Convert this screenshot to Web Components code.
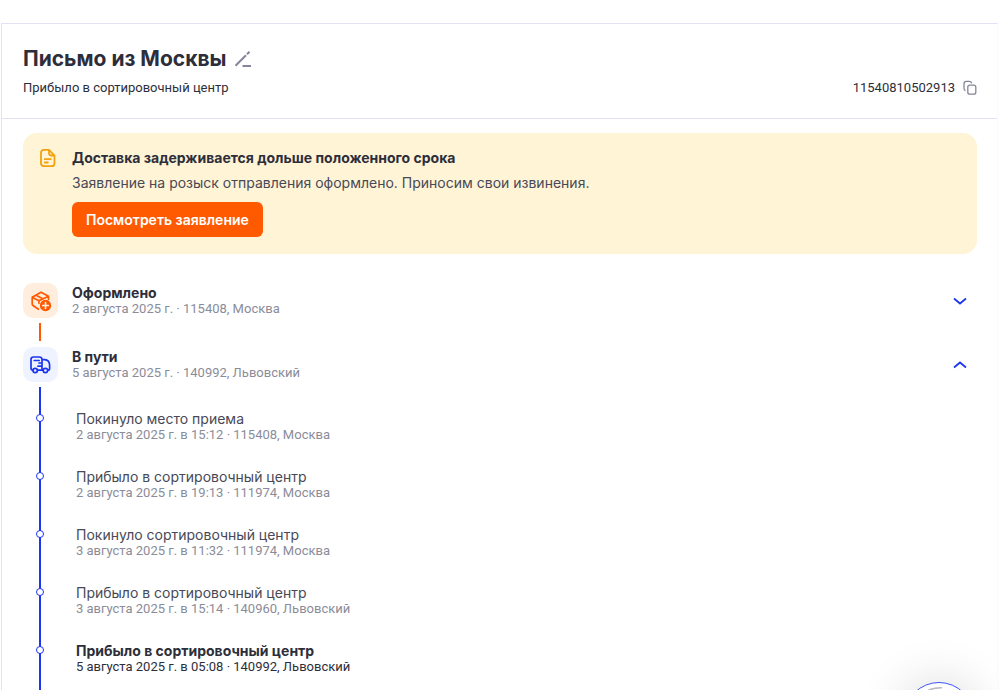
<!DOCTYPE html>
<html lang="ru">
<head>
<meta charset="utf-8">
<meta name="viewport" content="width=device-width, initial-scale=1">
<title>Письмо из Москвы</title>
<style>
html { scrollbar-width: none; }
body { margin: 0; background: #fff; color: #2d2e3a; font-family: Roboto, "Noto Sans", sans-serif; font-size: 13px; line-height: 16px; }
</style>
</head>
<body>
<tracking-page>
  <tracking-header slot="header" code="11540810502913">
    <span slot="title">Письмо из Москвы</span>
    <span slot="status">Прибыло в сортировочный центр</span>
  </tracking-header>
  <delay-notice>
    <span slot="title">Доставка задерживается дольше положенного срока</span>
    <span>Заявление на розыск отправления оформлено. Приносим свои извинения.</span>
    <span slot="action">Посмотреть заявление</span>
  </delay-notice>
  <tracking-stage kind="created" heading="Оформлено" meta="2 августа 2025 г. · 115408, Москва"></tracking-stage>
  <tracking-stage kind="transit" heading="В пути" meta="5 августа 2025 г. · 140992, Львовский" open>
    <tracking-event heading="Покинуло место приема" meta="2 августа 2025 г. в 15:12 · 115408, Москва"></tracking-event>
    <tracking-event heading="Прибыло в сортировочный центр" meta="2 августа 2025 г. в 19:13 · 111974, Москва"></tracking-event>
    <tracking-event heading="Покинуло сортировочный центр" meta="3 августа 2025 г. в 11:32 · 111974, Москва"></tracking-event>
    <tracking-event heading="Прибыло в сортировочный центр" meta="3 августа 2025 г. в 15:14 · 140960, Львовский"></tracking-event>
    <tracking-event heading="Прибыло в сортировочный центр" meta="5 августа 2025 г. в 05:08 · 140992, Львовский" current></tracking-event>
  </tracking-stage>
</tracking-page>
<chat-button></chat-button>

<script>
function define(name, html, setup) {
  const template = document.createElement('template');
  template.innerHTML = html;
  customElements.define(name, class extends HTMLElement {
    constructor() {
      super();
      this.attachShadow({ mode: 'open' }).append(template.content.cloneNode(true));
    }
    connectedCallback() { if (setup) setup(this, this.shadowRoot); }
  });
}

define('tracking-page', `
<style>
  :host { display: block; padding: 23px 2px 0 1px; }
  main { box-sizing: border-box; border: 1px solid #e2e2f4; border-right-color: #fafaff; border-bottom: 0; min-height: calc(100vh - 23px); }
  .content { padding: 14px 20px 0 21px; }
</style>
<main><slot name="header"></slot><div class="content"><slot></slot></div></main>`);

define('tracking-header', `
<style>
  :host { display: flex; justify-content: space-between; align-items: flex-end; padding: 21px 20px 22px 21px; border-bottom: 1px solid #e2e2f4; }
  h1 { margin: 0 0 7px; display: flex; align-items: center; gap: 8px; font: 700 21px/28px Inter, "Noto Sans", sans-serif; }
  p { margin: 0; }
  button { border: 0; padding: 0; background: none; display: block; color: #85869a; }
  svg { display: block; }
  .code { display: flex; align-items: center; gap: 8px; }
</style>
<div>
  <h1><slot name="title"></slot>
    <button type="button" aria-label="Переименовать"><svg width="18" height="18" viewBox="0 0 18 18" fill="none" stroke="currentColor" stroke-width="2"><path d="M1.500 15.700 12 5.200M13 4.200l2.500-2.500M8.500 16H17"/></svg></button>
  </h1>
  <p><slot name="status"></slot></p>
</div>
<div class="code"><span></span>
  <button type="button" aria-label="Скопировать"><svg width="14" height="16" viewBox="0 0 14 16" fill="none" stroke="currentColor" stroke-width="1.3"><rect x="4.8" y="5.2" width="8" height="9" rx="2"/><path d="M2.5 10.5C1.3 10.3 1 9.5 1 8.5V4c0-1.8.7-2.6 2.5-2.6H6c1.700 0 2.500.6 2.600 2"/></svg></button>
</div>`, (host, root) => { root.querySelector('.code span').textContent = host.getAttribute('code'); });

define('delay-notice', `
<style>
  :host { display: flex; gap: 15px; padding: 14px 16px 17px; border-radius: 14px; background: #fff4d6; font-family: Inter, "Noto Sans", sans-serif; }
  svg { flex: none; display: block; margin-top: 1px; color: #f2a20c; }
  h2 { margin: 0; font-size: 14px; line-height: 22px; font-weight: 700; }
  p { margin: 3px 0 8px; font-size: 14px; line-height: 22px; color: #484956; }
  button { display: block; border: 0; border-radius: 6px; padding: 0 14px; height: 35px; background: #ff5a00; color: #fff; font: 600 14px/35px Inter, "Noto Sans", sans-serif; }
</style>
<svg width="18" height="20" viewBox="0 0 18 20" fill="none" stroke="currentColor" stroke-width="1.800" stroke-linejoin="round" stroke-linecap="round"><path d="M10 1.800H5Q2 1.800 2 4.800v10.500Q2 18.200 5 18.200h7.500q3 0 3-3V7.500ZM10 1.800v3.200q0 2.500 2.500 2.500h3M5.800 11.200h6M5.800 14.500h3"/></svg>
<div><h2><slot name="title"></slot></h2><p><slot></slot></p><button type="button"><slot name="action"></slot></button></div>`);

define('tracking-stage', `
<style>
  :host { display: block; padding-top: 29px; }
  :host([open]) { padding-top: 0; }
  button { display: flex; align-items: center; width: 100%; gap: 14px; border: 0; padding: 0 9px 0 0; background: none; text-align: left; color: #2d2e3a; font: 13px/16px Roboto, "Noto Sans", sans-serif; }
  .icon { flex: none; width: 35px; height: 35px; border-radius: 10px; display: grid; place-items: center; background: #ffeddd; color: #ff5a00; }
  :host([kind=transit]) .icon { background: #eff3ff; color: #1c35f0; }
  .text { flex: 1; }
  b, small { display: block; }
  b { font: 700 14px/16px Inter, "Noto Sans", sans-serif; }
  small { font-size: 13px; color: #8b8c99; }
  svg { display: none; }
  .chevron, :host([kind=created]) .box, :host([kind=transit]) .truck { display: block; }
  .chevron { flex: none; color: #1c35f0; }
  :host([open]) .chevron { transform: scaleY(-1); }
  .stem { margin: 5px 0 6px 16px; width: 2px; height: 18px; background: #ff5a00; }
  .events { display: none; gap: 25px; margin: 5px 0 0 16px; border-left: 2px solid #1c35f0; padding: 23px 0 15px; }
  :host([open]) .events { display: grid; }
  :host([open]) .stem { display: none; }
</style>
<button type="button">
  <span class="icon">
    <svg class="box" width="22" height="22" viewBox="0 0 22 22" fill="none" stroke="currentColor" stroke-width="1.700" stroke-linejoin="round" stroke-linecap="round"><path d="M8.500 19.200 3 15.500Q2.200 15 2.200 14V7.200L11 2.200l7.500 4.100v3M2.200 7.200l6.800 3.500 9.500-4.400M6.200 5.200l6.500 3.500M9 10.700v2.500"/><circle cx="15.500" cy="15.500" r="4.800" fill="currentColor" stroke="currentColor"/><path stroke="#ffeddd" d="M15.500 12.700v5.600M12.700 15.500h5.600"/></svg>
    <svg class="truck" width="22" height="22" viewBox="0 0 22 22" fill="none" stroke="currentColor" stroke-width="1.700" stroke-linejoin="round" stroke-linecap="round"><path d="M2.900 16.200Q1 16 1 14V5.500Q1 3 3.400 3h6Q12 3 12 5.500v10.700M12 5.700h2.700q4.700.5 4.900 5.300v3.200q0 2-1.600 2M12 9h-3M7.400 16.200h5.500M4.200 6.500h5M8 12.200h4"/><circle cx="5.200" cy="16.500" r="2.200"/><circle cx="15.400" cy="16.500" r="2.200"/></svg>
  </span>
  <span class="text"><b></b><small></small></span>
  <svg class="chevron" width="16" height="16" viewBox="0 0 16 16" fill="none" stroke="currentColor" stroke-width="1.800"><path d="m2 5.500 6 5 6-5"/></svg>
</button>
<div class="stem"></div>
<div class="events"><slot></slot></div>`, fillRow);

define('tracking-event', `
<style>
  :host { display: flex; align-items: flex-start; }
  i { flex: none; box-sizing: border-box; width: 8px; height: 8px; margin: 4px 32px 0 -5px; border: 1px solid #1c35f0; border-radius: 50%; background: #fff; }
  b, small { display: block; }
  b { font: 400 14px/17px Inter, "Noto Sans", sans-serif; color: #484956; }
  small { font-size: 13px; line-height: 16px; color: #8b8c99; }
  :host([current]) b { font-weight: 700; color: #2d2e3a; }
  :host([current]) small { color: #2d2e3a; }
</style>
<i></i><div><b></b><small></small></div>`, fillRow);

define('chat-button', `
<style>
  :host { position: fixed; right: 26px; bottom: -62px; }
  button { display: block; width: 70px; height: 70px; padding: 0; border: 1px solid #3c54f5; border-radius: 50%; background: #fff; box-shadow: 0 0 50px rgba(0,0,0,.16); }
  svg { display: block; }
</style>
<button type="button" aria-label="Чат"><svg width="68" height="68" viewBox="0 0 68 68" fill="none" stroke="#b9bac0" stroke-width="1.500"><path d="M22 8q7-3.500 15-3.200"/></svg></button>`);

function fillRow(host, root) {
  root.querySelector('b').textContent = host.getAttribute('heading');
  root.querySelector('small').textContent = host.getAttribute('meta');
}
</script>
</body>
</html>
